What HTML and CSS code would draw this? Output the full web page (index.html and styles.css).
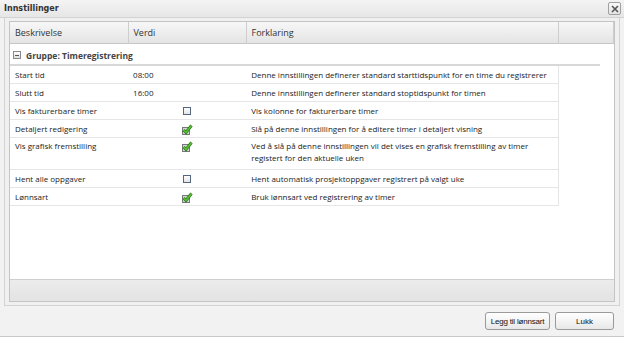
FILE: index.html
```html
<!DOCTYPE html>
<html lang="no">
<head>
    <meta charset="UTF-8">
    <title>Innstillinger</title>
    <link rel="stylesheet" href="styles.css">
</head>
<body>
    <div class="dialog">
        <div class="titlebar">
            <span class="title">Innstillinger</span>
            <span class="close">
                <svg width="10" height="10" viewBox="0 0 10 10"><path d="M2 2 L8 8 M8 2 L2 8" stroke="#555" stroke-width="1.6"/></svg>
            </span>
        </div>
        <div class="frame">
            <div class="grid">
                <table class="grid-head">
                    <colgroup><col class="c1"><col class="c2"><col class="c3"><col></colgroup>
                    <tr>
                        <th>Beskrivelse</th>
                        <th>Verdi</th>
                        <th>Forklaring</th>
                        <th></th>
                    </tr>
                </table>
                <div class="group-row">
                    <span class="toggle"></span>
                    <span>Gruppe: Timeregistrering</span>
                </div>
                <table class="rows">
                    <colgroup><col class="c1"><col class="c2"><col class="c3"></colgroup>
                    <tr>
                        <td>Start tid</td>
                        <td>08:00</td>
                        <td>Denne innstillingen definerer standard starttidspunkt for en time du registrerer</td>
                    </tr>
                    <tr>
                        <td>Slutt tid</td>
                        <td>16:00</td>
                        <td>Denne innstillingen definerer standard stoptidspunkt for timen</td>
                    </tr>
                    <tr>
                        <td>Vis fakturerbare timer</td>
                        <td class="check"><span class="box"></span></td>
                        <td>Vis kolonne for fakturerbare timer</td>
                    </tr>
                    <tr>
                        <td>Detaljert redigering</td>
                        <td class="check"><svg class="ticked" width="12" height="11" viewBox="0 0 12 11"><rect x="1.5" y="3.5" width="7" height="7" fill="#d8d8d8" stroke="#777"/><path d="M2.5 6 L5 8.5 L10.5 1.5" fill="none" stroke="#2f7d1e" stroke-width="3"/><path d="M2.5 6 L5 8.5 L10.5 1.5" fill="none" stroke="#5cc43a" stroke-width="1.4"/></svg></td>
                        <td>Slå på denne innstillingen for å editere timer i detaljert visning</td>
                    </tr>
                    <tr class="tall">
                        <td>Vis grafisk fremstilling</td>
                        <td class="check"><svg class="ticked" width="12" height="11" viewBox="0 0 12 11"><rect x="1.5" y="3.5" width="7" height="7" fill="#d8d8d8" stroke="#777"/><path d="M2.5 6 L5 8.5 L10.5 1.5" fill="none" stroke="#2f7d1e" stroke-width="3"/><path d="M2.5 6 L5 8.5 L10.5 1.5" fill="none" stroke="#5cc43a" stroke-width="1.4"/></svg></td>
                        <td>Ved å slå på denne innstillingen vil det vises en grafisk fremstilling av timer registert for den aktuelle uken</td>
                    </tr>
                    <tr>
                        <td>Hent alle oppgaver</td>
                        <td class="check"><span class="box"></span></td>
                        <td>Hent automatisk prosjektoppgaver registrert på valgt uke</td>
                    </tr>
                    <tr>
                        <td>Lønnsart</td>
                        <td class="check"><svg class="ticked" width="12" height="11" viewBox="0 0 12 11"><rect x="1.5" y="3.5" width="7" height="7" fill="#d8d8d8" stroke="#777"/><path d="M2.5 6 L5 8.5 L10.5 1.5" fill="none" stroke="#2f7d1e" stroke-width="3"/><path d="M2.5 6 L5 8.5 L10.5 1.5" fill="none" stroke="#5cc43a" stroke-width="1.4"/></svg></td>
                        <td>Bruk lønnsart ved registrering av timer</td>
                    </tr>
                </table>
                <div class="spacer"></div>
                <div class="grid-foot"></div>
            </div>
        </div>
        <div class="buttons">
            <button class="btn wide">Legg til lønnsart</button>
            <button class="btn">Lukk</button>
        </div>
    </div>
</body>
</html>
```

FILE: styles.css
```css
html, body {
    margin: 0;
    background: #ffffff;
}

body {
    font-family: 'Open Sans', sans-serif;
    font-size: 8px;
    color: #222;
}

.dialog {
    width: 624px;
    height: 337px;
    background: #f2f2f2;
    border-bottom: 1px solid #c8c8c8;
    display: flex;
    flex-direction: column;
    box-sizing: border-box;
}

.titlebar {
    height: 17px;
    display: flex;
    align-items: center;
    justify-content: space-between;
    padding: 0 3px 0 4px;
    background: linear-gradient(to bottom, #f4f4f4, #e6e6e6);
    border-bottom: 1px solid #d2d2d2;
    flex-shrink: 0;
}

.title {
    font-family: 'DejaVu Sans', sans-serif;
    font-weight: bold;
    font-size: 8px;
    color: #333;
}

.close {
    width: 11px;
    height: 11px;
    border: 1px solid #a0a0a0;
    border-radius: 2px;
    background: linear-gradient(to bottom, #fafafa, #e2e2e2);
    display: flex;
    align-items: center;
    justify-content: center;
}

.frame {
    margin: 0 4px;
    padding: 3px 4px;
    border: 1px solid #d4d4d4;
    border-top: none;
    background: #f0f0f0;
    height: 288px;
    box-sizing: border-box;
    display: flex;
}

.grid {
    flex: 1;
    background: #fff;
    border: 1px solid #c4c4c4;
    display: flex;
    flex-direction: column;
}

table {
    border-collapse: collapse;
    table-layout: fixed;
}

.c1 { width: 118px; }
.c2 { width: 118px; }
.c3 { width: 312px; }

.grid-head {
    width: 100%;
    background: linear-gradient(to bottom, #f7f7f7, #e3e3e3);
    border-bottom: 1px solid #c6c6c6;
}

.grid-head th {
    height: 21px;
    padding: 0 0 0 5px;
    text-align: left;
    font-size: 9px;
    font-weight: normal;
    border-right: 1px solid #cdcdcd;
    color: #333;
}

.group-row {
    width: 590px;
    height: 22px;
    display: flex;
    align-items: center;
    gap: 5px;
    padding: 2px 0 0 3px;
    box-sizing: border-box;
    font-size: 8.5px;
    font-weight: bold;
    color: #444;
    border-bottom: 2px solid #d8d8d8;
}

.toggle {
    width: 6px;
    height: 6px;
    border: 1px solid #8a8a8a;
    background: linear-gradient(#fff, #ddd);
    position: relative;
}

.toggle::after {
    content: "";
    position: absolute;
    left: 1px;
    right: 1px;
    top: 2.5px;
    height: 1px;
    background: #555;
}

.rows {
    width: 549px;
}

.rows td {
    height: 17px;
    padding: 0 0 0 5px;
    border-bottom: 1px solid #e6e6e6;
    vertical-align: middle;
    line-height: 12px;
}

.rows td:last-child {
    border-right: 1px solid #e6e6e6;
}

.rows .tall td {
    height: 29px;
    vertical-align: top;
    padding-top: 2px;
}

.rows .check {
    text-align: center;
    padding-left: 0;
}

.box {
    display: inline-block;
    width: 6px;
    height: 6px;
    border: 1px solid #556680;
    background: linear-gradient(#fff, #e4e4e4);
    vertical-align: middle;
}

.ticked {
    vertical-align: middle;
}

.spacer {
    flex: 1;
}

.grid-foot {
    height: 21px;
    border-top: 1px solid #cfcfcf;
    background: linear-gradient(to bottom, #ececec, #e3e3e3);
}

.buttons {
    flex: 1;
    display: flex;
    justify-content: flex-end;
    align-items: center;
    gap: 5px;
    padding: 0 10px 0 0;
}

.btn {
    height: 18px;
    width: 59px;
    padding: 0;
    font-family: 'Liberation Sans', sans-serif;
    font-size: 8px;
    color: #111;
    border: 1px solid #9a9a9a;
    border-radius: 3px;
    background: linear-gradient(to bottom, #ffffff, #e8e8e8);
}

.btn.wide {
    width: 65px;
    letter-spacing: -0.2px;
}
```
